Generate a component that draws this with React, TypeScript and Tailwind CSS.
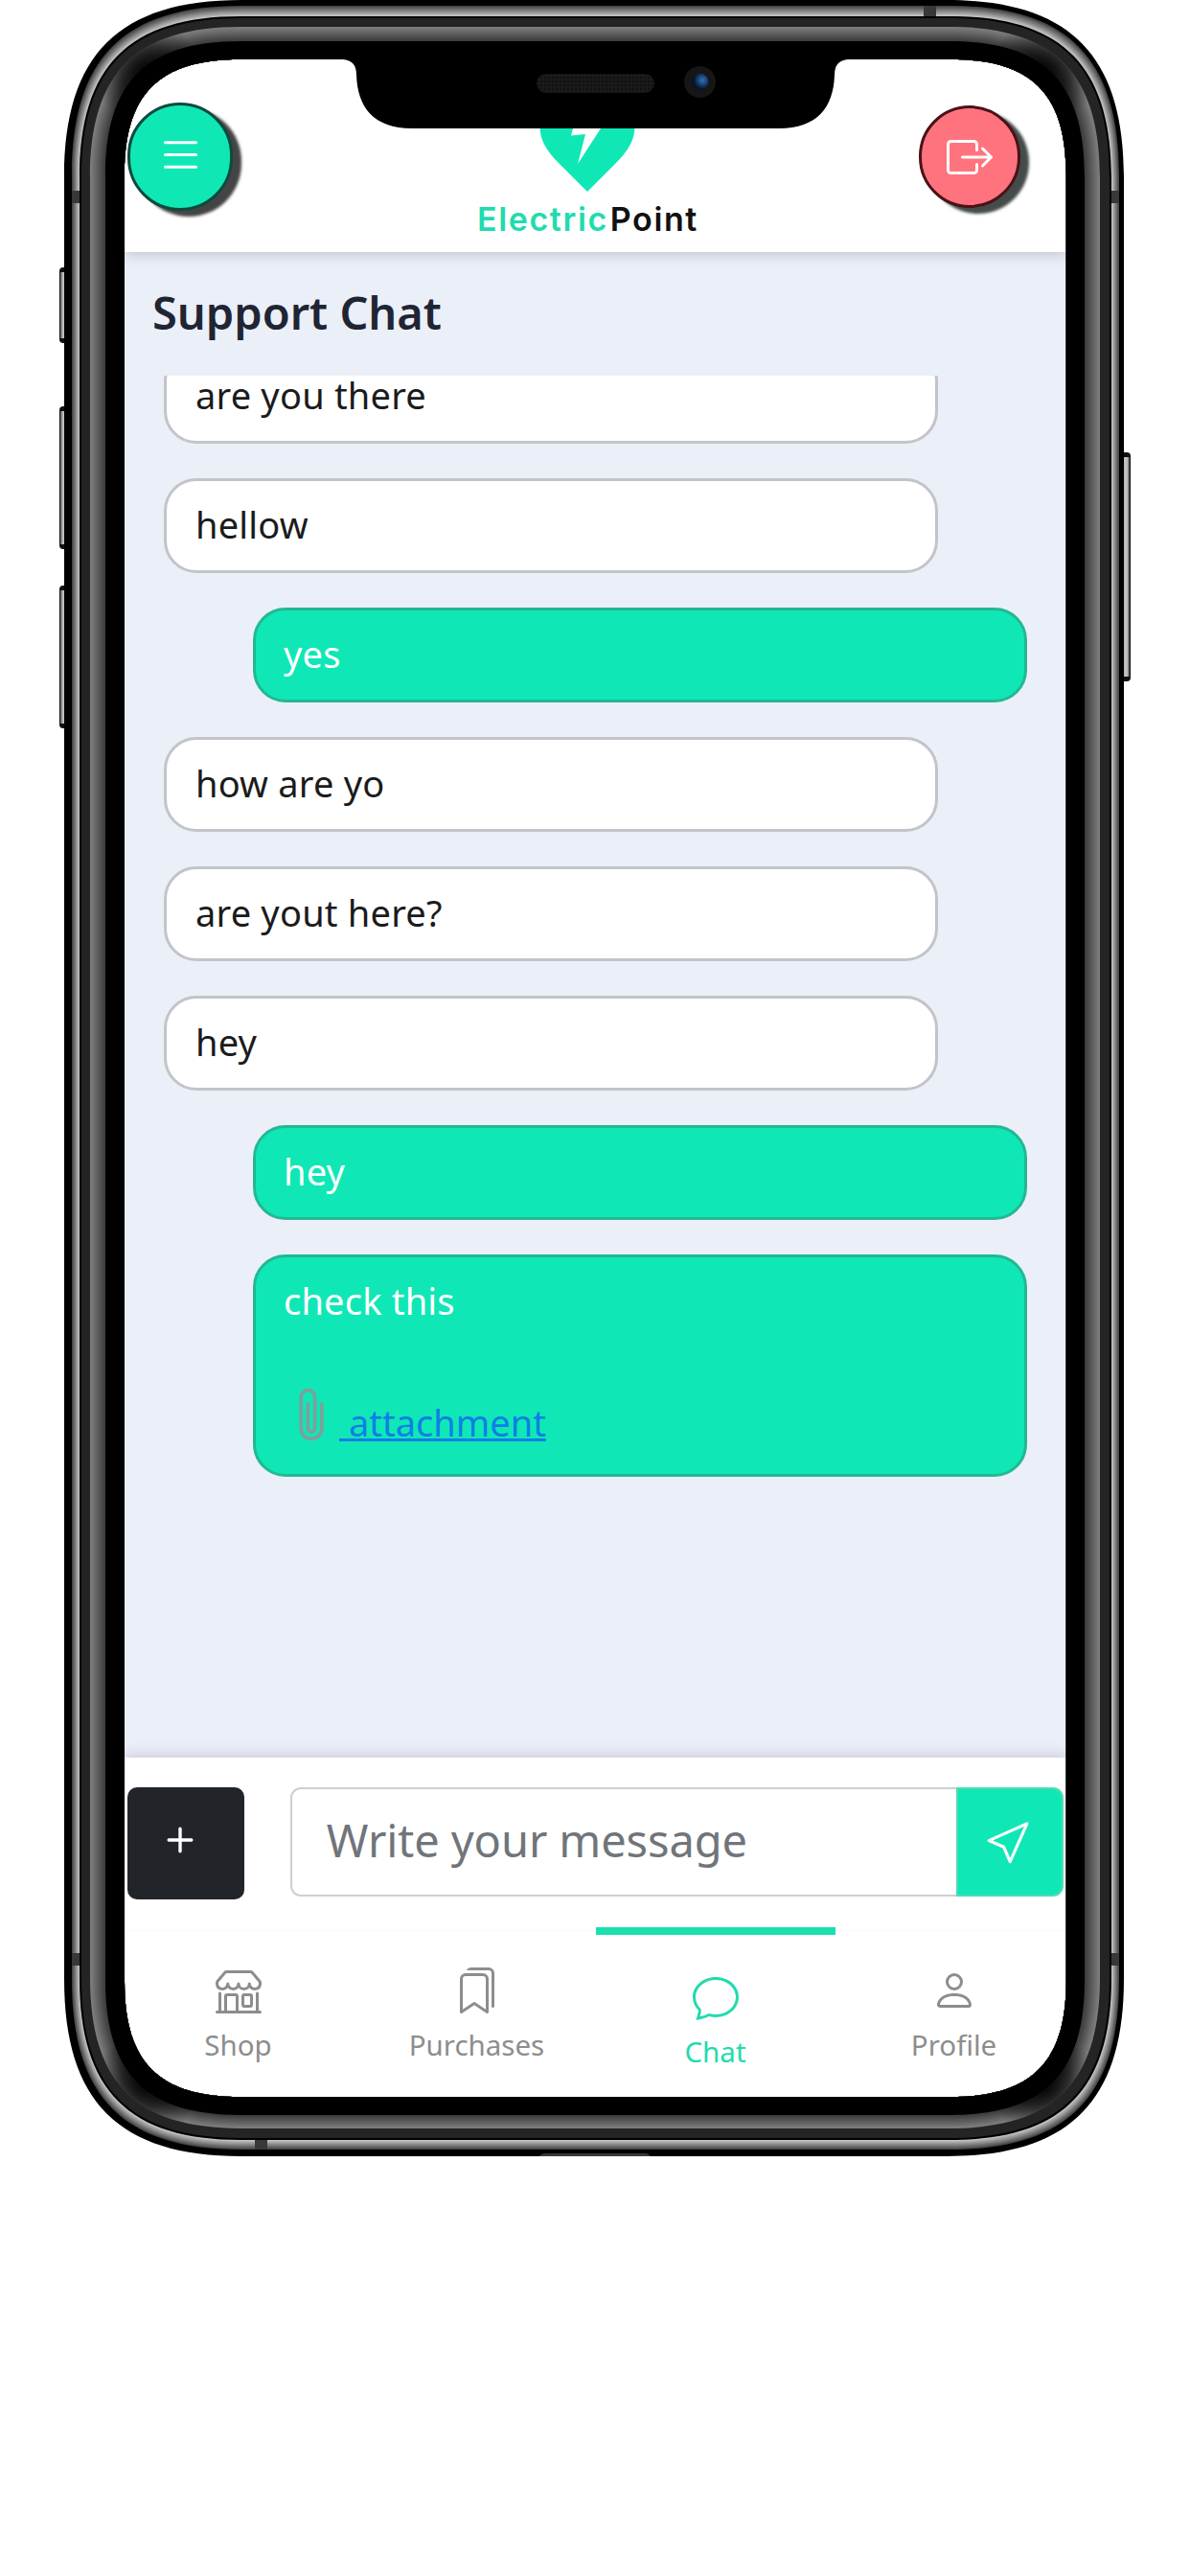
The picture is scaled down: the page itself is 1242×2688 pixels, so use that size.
import { BsBookmarks, BsBoxArrowRight, BsChat, BsCursor, BsList, BsPaperclip, BsPerson, BsPlus, BsShop } from "react-icons/bs";

type Box = [number, number, number, number];

const SCREEN: Box = [130, 62, 1112.7, 2188];

/** Closed path with continuous-curvature corners. */
function squircle([l, t, r, b]: Box) {
  const k = Math.min(1, (l - 67) / 63);
  const L = 185 - k * 65;
  const c = 57 - k * 21;
  return `M${l} ${t + L}C${l} ${t + c} ${l + c} ${t} ${l + L} ${t}H${r - L}C${r - c} ${t} ${r} ${t + c} ${r} ${t + L}V${b - L}C${r} ${b - c} ${r - c} ${b} ${r - L} ${b}H${l + L}C${l + c} ${b} ${l} ${b - c} ${l} ${b - L}Z`;
}

const mix = (a: number, b: number, k: number) => a + (b - a) * k;

function band(from: Box, to: Box, c0: number, c1: number, steps = 10) {
  return Array.from({ length: steps }, (_, i) => {
    const k = i / steps;
    const v = Math.round(mix(c0, c1, i / (steps - 1)));
    return {
      box: from.map((n, j) => mix(n, to[j], k)) as Box,
      fill: `rgb(${v},${v},${v})`,
    };
  });
}

const RIM = band([75, 6, 1168, 2243], [83, 17, 1160, 2233], 70, 195);
const BEVEL = band([94, 28, 1148, 2221], [110, 43, 1132, 2207], 125, 62);
const LAYERS = [
  { box: [67, 0, 1173, 2250] as Box, fill: "#000" },
  ...RIM,
  { box: [83, 17, 1160, 2233] as Box, fill: "#000" },
  { box: [85, 19, 1158, 2231] as Box, fill: "#242424" },
  ...BEVEL,
];

function PhoneFrame() {
  const hole = squircle(SCREEN);
  return (
    <svg className="pointer-events-none absolute left-0 top-0 z-20" width="1242" height="2260" viewBox="0 0 1242 2260">
      <defs>
        <linearGradient id="key" x1="0" x2="1">
          <stop offset="0" stopColor="#555" />
          <stop offset=".35" stopColor="#c4c4c4" />
          <stop offset=".7" stopColor="#bbb" />
          <stop offset="1" stopColor="#333" />
        </linearGradient>
        <radialGradient id="shade">
          <stop offset="0" stopColor="#000" stopOpacity=".9" />
          <stop offset=".45" stopColor="#000" stopOpacity=".6" />
          <stop offset="1" stopColor="#000" stopOpacity="0" />
        </radialGradient>
        <radialGradient id="lens" cx=".65" cy=".4">
          <stop offset="0" stopColor="#2f74b5" />
          <stop offset=".5" stopColor="#1c4578" />
          <stop offset="1" stopColor="#0a1428" />
        </radialGradient>
        <pattern id="mesh" width="4" height="4" patternUnits="userSpaceOnUse">
          <rect width="4" height="4" fill="#1a1a1a" />
          <rect width="2" height="2" fill="#101010" />
        </pattern>
        <clipPath id="ring">
          <path clipRule="evenodd" d={squircle([94, 28, 1148, 2221]) + hole} />
        </clipPath>
      </defs>
      {[
        [62, 279, 79],
        [62, 424, 149],
        [62, 611, 149],
        [1170, 472, 239],
      ].map(([x, y, h]) => (
        <g key={y}>
          <rect x={x} y={y} width="10" height={h} rx="4" fill="#111" />
          <rect x={x + 1} y={y + 5} width="8" height={h - 10} fill="url(#key)" />
        </g>
      ))}
      {LAYERS.map(({ box, fill }, i) => (
        <path key={i} fillRule="evenodd" fill={fill} d={squircle(box) + hole} />
      ))}
      <g clipPath="url(#ring)">
        {[
          [152, 74],
          [1090, 74],
          [152, 2176],
          [1090, 2176],
        ].map(([x, y]) => (
          <circle key={`${x}-${y}`} cx={x} cy={y} r="56" fill="url(#shade)" />
        ))}
      </g>
      <path fillRule="evenodd" d={squircle([110, 43, 1132, 2207]) + hole} />
      <g fill="#383838">
        <rect x="75" y="199" width="8" height="13" />
        <rect x="1160" y="199" width="8" height="13" />
        <rect x="75" y="2038" width="8" height="13" />
        <rect x="1160" y="2038" width="8" height="13" />
        <rect x="964" y="6" width="13" height="11" />
        <rect x="266" y="2233" width="13" height="10" />
        <path d="M563 2250q2-3 6-3h104q4 0 6 3z" />
      </g>
      <path d="M358 60V62Q372 63 372 78C373 112 390 134 430 134H813C853 134 870 112 871 78Q871 63 885 62V60Z" />
      <rect x="560" y="77" width="123" height="20" rx="10" fill="url(#mesh)" />
      <circle cx="730.5" cy="85.5" r="16.5" fill="#161616" />
      <circle cx="730.5" cy="85.5" r="9" fill="url(#lens)" />
    </svg>
  );
}

function Header() {
  return (
    <header className="relative z-10 flex h-[201px] shrink-0 items-start justify-between bg-white pl-[3px] pr-[48px] shadow-[0_2px_14px_rgba(0,0,0,0.2)]">
      <button className="mt-[45px] flex h-[113px] w-[110px] items-center justify-center rounded-full border-[3px] border-[#0b4a3e] bg-[#0fe8b5] text-white shadow-[9px_6px_3px_#444]">
        <BsList className="mb-[4px] h-[53px] w-[51px]" />
      </button>
      <div className="ml-[25px] flex flex-col items-center">
        <svg className="mt-[40px]" width="100" height="98" viewBox="563 102 100 98">
          <path
            fill="#0fe8b5"
            d="M613 200L584 171C570 157 563.5 146 563.5 132C563.5 104 598 98 613 116C628 98 662.5 104 662.5 132C662.5 146 656 157 642 171Z"
          />
          <path fill="#fff" d="M604 112L596 141.5L611 140L603 171L627 134H615L622 112Z" />
        </svg>
        <p className="mt-[9px] whitespace-nowrap font-['Inter',sans-serif] text-[34px] font-semibold leading-[40px] tracking-[1.6px] text-[#111]">
          <span className="mr-[2px] text-[#1fdcae]">Electric</span>Point
        </p>
      </div>
      <button className="mt-[48px] flex h-[107px] w-[106px] items-center justify-center rounded-full border-[3px] border-[#4a1218] bg-[#ff737e] text-white shadow-[9px_6px_3px_#444c4a]">
        <BsBoxArrowRight className="size-[48px]" />
      </button>
    </header>
  );
}

function Bubble({ text, mine, attachment }: { text: string; mine?: boolean; attachment?: string }) {
  return (
    <div
      className={
        mine
          ? "ml-[134px] w-[808px] rounded-[34px] border-[3px] border-[#22b893] bg-[#10e7b6] px-[29px] text-white"
          : "ml-[41px] w-[808px] rounded-[34px] border-[3px] border-[#c2c4c9] bg-white px-[30px] text-[#1b1b1b]"
      }
    >
      <p className="h-[93px] text-[38px] leading-[91px] tracking-[0.2px]">{text}</p>
      {attachment && (
        <div className="flex h-[133px] items-start">
          <BsPaperclip className="mt-[42px] size-[58px] text-[#7f9f9c]" />
          <a className="mt-[34px] whitespace-pre text-[38px] leading-[91px] text-[#0c7fe6] underline"> {attachment}</a>
        </div>
      )}
    </div>
  );
}

const MESSAGES = [
  { text: "are you there" },
  { text: "hellow" },
  { text: "yes", mine: true },
  { text: "how are yo" },
  { text: "are yout here?" },
  { text: "hey" },
  { text: "hey", mine: true },
  { text: "check this", mine: true, attachment: "attachment" },
];

const TABS = [
  { label: "Shop", Icon: BsShop },
  { label: "Purchases", Icon: BsBookmarks },
  { label: "Chat", Icon: BsChat, active: true },
  { label: "Profile", Icon: BsPerson },
];

export default function App() {
  return (
    <div className="relative h-[2688px] w-[1242px] overflow-hidden bg-white pl-[130px] pt-[62px] font-['Noto_Sans',sans-serif]">
      <div className="flex h-[2126px] w-[983px] flex-col overflow-hidden bg-[#ebeff8]">
        <Header />
        <main className="flex h-[1571px] shrink-0 flex-col">
          <h1 className="h-[129px] shrink-0 pl-[29px] text-[47px] font-semibold leading-[127px] text-[#1f2533]">
            Support Chat
          </h1>
          <div className="flex flex-1 flex-col justify-start overflow-hidden">
            <div className="-mt-[28px] flex flex-col gap-[36px]">
              {MESSAGES.map((m, i) => (
                <Bubble key={i} {...m} />
              ))}
            </div>
          </div>
        </main>
        <footer className="relative flex h-[180px] shrink-0 items-start bg-white px-[3px] pt-[31px] shadow-[0_-2px_14px_rgba(60,40,90,0.2)]">
          <button className="flex h-[117px] w-[122px] items-center justify-center rounded-[10px] bg-[#212529] text-white">
            <BsPlus className="-ml-[12px] mb-[8px] size-[54px]" />
          </button>
          <div className="ml-[48px] flex h-[114px] w-[696px] items-center rounded-l-[11px] border-2 border-r-0 border-[#cfcfcf] pb-[3px] pl-[36px] text-[47px] tracking-[-0.1px] text-[#70757a]">
            Write your message
          </div>
          <button className="flex h-[114px] w-[112px] items-center justify-center rounded-r-[11px] border-2 border-[#4fdcb4] bg-[#10e7b6] text-white">
            <BsCursor className="mb-[5px] size-[50px]" />
          </button>
        </footer>
        <nav className="relative -ml-[6px] flex flex-1 border-t border-[#fafafa] bg-white">
          {TABS.map(({ label, Icon, active }) => (
            <div
              key={label}
              className={
                active
                  ? "relative flex w-[249px] shrink-0 flex-col items-center pt-[45px] text-[#21dbae]"
                  : "flex w-[249px] shrink-0 flex-col items-center pt-[38px] text-[#8d8d8d]"
              }
            >
              {active && <span className="absolute -top-[4px] left-0 h-[8px] w-[250px] bg-[#1cdfb0]" />}
              <Icon className="size-[48px]" />
              <span className="mt-[13px] text-[29.5px] leading-[40px]">{label}</span>
            </div>
          ))}
        </nav>
      </div>
      <PhoneFrame />
    </div>
  );
}
